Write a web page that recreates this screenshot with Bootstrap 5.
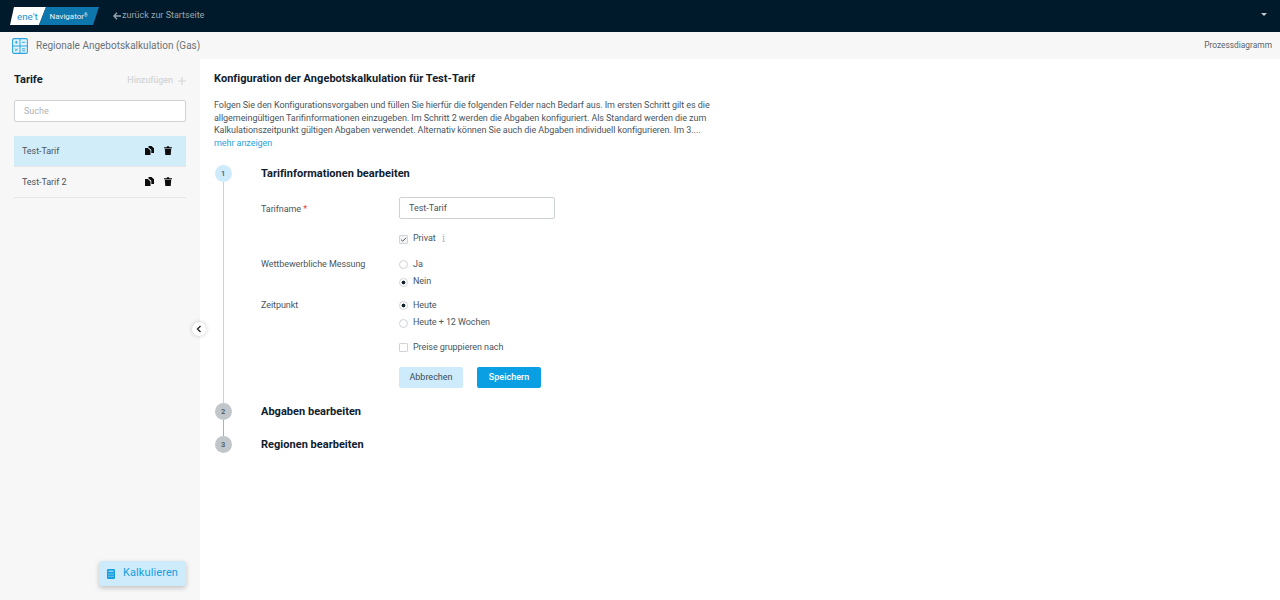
<!DOCTYPE html>
<html lang="de">
<head>
  <meta charset="UTF-8">
  <title>Regionale Angebotskalkulation</title>
  <link href="https://cdn.jsdelivr.net/npm/bootstrap@5.3.0/dist/css/bootstrap.min.css" rel="stylesheet">
  <style>
    html, body { height: 100%; }
    body { font-family: Roboto, "Liberation Sans", sans-serif; font-size: 9px; color: #4a5560; overflow: hidden; letter-spacing: -.07px; }
    .top-nav { height: 32px; background: #001a2c; padding: 0 10px; flex-wrap: nowrap; justify-content: flex-start; }
    .brand-logo { width: 90px; height: 18px; display: block; }
    .brand-logo text { font-family: Roboto, sans-serif; letter-spacing: 0; }
    .back-link { color: #9aa6ae; font-size: 9px; margin-left: 13px; text-decoration: none; letter-spacing: 0; gap: 1px; }
    .nav-caret { width: 0; height: 0; border-left: 3px solid transparent; border-right: 3px solid transparent; border-top: 3px solid #c4ccd2; margin-left: auto; margin-right: 3px; margin-top: -3px; }
    .sub-head { height: 27px; background: #f7f7f7; padding: 0 8px 0 12px; }
    .sub-title { font-size: 10px; color: #6b7278; margin-left: 8px; letter-spacing: 0; }
    .sub-link { font-size: 8.4px; color: #5c6369; margin-left: auto; letter-spacing: 0; }
    .page-body { height: 541px; }
    .side-col { width: 200px; background: #f7f7f7; padding: 0 14px 14px; position: relative; flex: none; }
    .side-head { height: 41px; padding-top: 2px; }
    .side-title { font-size: 11px; font-weight: 700; color: #10202c; letter-spacing: 0; }
    .side-add { font-size: 9px; font-weight: 500; color: #d2d6d9; margin-left: auto; }
    .side-add svg { margin-left: 5px; }
    .search-field { height: 22px; font-size: 9px; padding: 0 9px; border: 1px solid #ccd2d6; border-radius: 2px; }
    .search-field::placeholder { color: #adb3b8; opacity: 1; }
    .tarif-list { margin-top: 14px; border-radius: 0; }
    .tarif-item { background: transparent; border: 0; border-bottom: 1px solid #e4e6e8; border-radius: 0 !important; padding: 2px 14px 0 8px; height: 31px; font-size: 9px; color: #4a5560; }
    .tarif-item.is-on { background: #d2edfa; border-bottom-color: #e4e6e8; }
    .tarif-icons { margin-left: auto; gap: 10px; margin-top: -3px; }
    .calc-btn { margin-top: auto; align-self: flex-end; width: 87px; height: 25px; background: #cdebfb; color: #159ee0; font-size: 11px; border: 0; border-radius: 3px; box-shadow: 0 2px 5px rgba(0,0,0,.22); padding: 0; letter-spacing: .1px; }
    .calc-btn svg { margin-right: 8px; }
    .collapse-btn { position: absolute; left: 192px; top: 263px; width: 14px; height: 14px; background: #fff; border: 0; border-radius: 50%; box-shadow: 0 0 4px rgba(0,0,0,.22); padding: 0; }
    .main-col { flex: 1; background: #fff; padding: 0 14px; }
    .main-title { font-size: 11px; font-weight: 700; color: #10202c; margin: 0; height: 40px; line-height: 40px; letter-spacing: .04px; }
    .intro-text { width: 500px; font-size: 9px; line-height: 12.6px; margin: 0; letter-spacing: -.06px; white-space: nowrap; }
    .more-link { color: #2aa3e2; text-decoration: none; }
    .step-row { gap: 29px; }
    .step-rail { width: 18px; flex: none; }
    .step-dot { width: 17px; height: 17px; border-radius: 50%; background: #c0c6ca; color: #4a5560; font-size: 7.5px; font-weight: 500; flex: none; }
    .step-dot.is-on { background: #cdebfb; }
    .step-line { flex: 1; width: 1px; background: #aab1b6; }
    .step-line.is-on { background: #a9dcf6; }
    .step-head { font-size: 11px; font-weight: 700; color: #10202c; height: 17px; line-height: 17px; margin: 0; letter-spacing: .02px; }
    .first-step { margin-top: 16px; height: 238px; }
    .second-step { height: 33px; margin-top: 0; }
    .third-step { height: 17px; }
    .step-form { padding-top: 15px; }
    .form-line { display: flex; }
    .form-lab { width: 138px; flex: none; }
    .lab-top { padding-top: 2px; }
    .privat-line { margin-top: 11px; }
    .zeit-line { margin-top: 6px; }
    .preise-line { margin-top: 7px; }
    .btn-line { margin-top: 11px; }
    .req-star { color: #e2403c; }
    .name-field { width: 156px; height: 22px; font-size: 9px; padding: 0 9px; border: 1px solid #ccd2d6; border-radius: 2px; color: #4a5560; }
    .opt-line { height: 17.5px; display: flex; align-items: center; gap: 5px; margin: 0; padding: 0; min-height: 0; }
    .opt-line .form-check-input { width: 9px; height: 9px; margin: 0; float: none; border: 1px solid #d0d4d8; flex: none; }
    .opt-line .form-check-input:checked[type=radio] { background: radial-gradient(circle, #14222c 0 1.7px, #fff 2.2px); border-color: #d0d4d8; }
    .opt-line .form-check-input[type=checkbox] { border-radius: 1px; }
    .opt-line .form-check-input:checked[type=checkbox] { background: #f4f5f6 url("data:image/svg+xml,%3Csvg xmlns='http://www.w3.org/2000/svg' viewBox='0 0 9 9'%3E%3Cpath d='M2 4.6l1.7 1.6L7 2.8' fill='none' stroke='%23555' stroke-width='1'/%3E%3C/svg%3E") center/9px no-repeat; border-color: #d0d4d8; }
    .opt-line .form-check-label { font-size: 9px; color: #4a5560; }
    .info-mark { font-family: "DejaVu Serif", serif; font-size: 11px; color: #b5bbc0; margin-left: 1px; line-height: 1; margin-top: -2px; }
    .cancel-btn, .save-btn { width: 64px; height: 21px; font-size: 9px; padding: 0; border: 0; border-radius: 2px; font-weight: 500; letter-spacing: 0; }
    .cancel-btn { background: #cdebfb; color: #3b4b57; font-weight: 400; }
    .save-btn { background: #0a9fe3; color: #fff; margin-left: 14px; }
  </style>
</head>
<body>
  <nav class="navbar top-nav">
    <svg class="brand-logo" viewBox="0 0 90 18" aria-label="ene't Navigator">
      <polygon points="4,0 36,0 29,18 0,18" fill="#fff"/>
      <polygon points="36,0 89,0 83,18 29,18" fill="#0d76ad"/>
      <text x="7" y="12.500" font-size="9.800" fill="#1693d4">ene't</text>
      <text x="39.500" y="12" font-size="8" fill="#e8f3f9">Navigator<tspan font-size="4.500" dy="-2.500">®</tspan></text>
    </svg>
    <a class="back-link d-flex align-items-center" href="#">
      <svg width="8" height="8" viewBox="0 0 8 8"><path d="M4 .8 .9 4 4 7.200M1 4h7" fill="none" stroke="#9aa6ae" stroke-width="1.300"/></svg>
      zurück zur Startseite
    </a>
    <span class="nav-caret"></span>
  </nav>

  <div class="sub-head d-flex align-items-center">
    <svg width="16" height="16" viewBox="0 0 16 16">
      <rect x=".6" y=".6" width="14.800" height="14.800" rx="1.500" fill="#e3f3fc" stroke="#2aa3e2" stroke-width="1.100"/>
      <path d="M8 .6v14.800M.6 8h14.800" stroke="#2aa3e2" stroke-width="1"/>
      <path d="M2.800 4.300h3M4.300 2.800v3M10 4.300h3.200M3 10.500l2.400 2.400M5.400 10.500 3 12.900M10 10.800h3.200M10 12.800h3.200" stroke="#2aa3e2" stroke-width=".9"/>
    </svg>
    <span class="sub-title">Regionale Angebotskalkulation (Gas)</span>
    <span class="sub-link">Prozessdiagramm</span>
  </div>

  <div class="page-body d-flex">
    <aside class="side-col d-flex flex-column">
      <div class="side-head d-flex align-items-center">
        <span class="side-title">Tarife</span>
        <span class="side-add d-flex align-items-center">Hinzufügen
          <svg width="8" height="8" viewBox="0 0 8 8"><path d="M4 0v8M0 4h8" stroke="#d2d6d9" stroke-width="1.200"/></svg>
        </span>
      </div>
      <input class="form-control search-field" type="text" placeholder="Suche">
      <div class="list-group tarif-list">
        <div class="list-group-item tarif-item is-on d-flex align-items-center">
          Test-Tarif
          <span class="tarif-icons d-flex align-items-center">
            <svg width="9" height="9" viewBox="0 0 9 9"><path d="M3.500 0H6.500L9 2.200V7H6.300V3.800L3.500 1.500Z" fill="#0d0d0d"/><path d="M0 2H2.800L5.500 4.500V9H0Z" fill="#0d0d0d"/></svg>
            <svg width="8" height="9" viewBox="0 0 8 9"><path d="M0 1.200H2.600L3 .2H5L5.400 1.200H8V2.200H0ZM.8 2.800H7.200L6.700 9H1.300Z" fill="#0d0d0d"/></svg>
          </span>
        </div>
        <div class="list-group-item tarif-item d-flex align-items-center">
          Test-Tarif 2
          <span class="tarif-icons d-flex align-items-center">
            <svg width="9" height="9" viewBox="0 0 9 9"><path d="M3.500 0H6.500L9 2.200V7H6.300V3.800L3.500 1.500Z" fill="#0d0d0d"/><path d="M0 2H2.800L5.500 4.500V9H0Z" fill="#0d0d0d"/></svg>
            <svg width="8" height="9" viewBox="0 0 8 9"><path d="M0 1.200H2.600L3 .2H5L5.400 1.200H8V2.200H0ZM.8 2.800H7.200L6.700 9H1.300Z" fill="#0d0d0d"/></svg>
          </span>
        </div>
      </div>
      <button class="btn calc-btn d-flex align-items-center justify-content-center" type="button">
        <svg width="8" height="10" viewBox="0 0 8 10"><rect width="8" height="10" rx="1.300" fill="#159ee0"/><path d="M1.500 2.200h5M1.500 5h1M3.500 5h1M5.500 5h1M1.500 7.300h1M3.500 7.300h1M5.500 7.300h1" stroke="#cdebfb" stroke-width="1"/></svg>
        Kalkulieren
      </button>
      <button class="collapse-btn d-flex align-items-center justify-content-center" type="button" aria-label="Einklappen">
        <svg width="6" height="8" viewBox="0 0 6 8"><path d="M4.500 1 1.500 4l3 3" fill="none" stroke="#222" stroke-width="1.300"/></svg>
      </button>
    </aside>

    <main class="main-col">
      <h1 class="main-title">Konfiguration der Angebotskalkulation für Test-Tarif</h1>
      <p class="intro-text">Folgen Sie den Konfigurationsvorgaben und füllen Sie hierfür die folgenden Felder nach Bedarf aus. Im ersten Schritt gilt es die<br>allgemeingültigen Tarifinformationen einzugeben. Im Schritt 2 werden die Abgaben konfiguriert. Als Standard werden die zum<br>Kalkulationszeitpunkt gültigen Abgaben verwendet. Alternativ können Sie auch die Abgaben individuell konfigurieren. Im 3....<br><a class="more-link" href="#">mehr anzeigen</a></p>

      <div class="step-row first-step d-flex">
        <div class="step-rail d-flex flex-column align-items-center">
          <span class="step-dot is-on d-flex align-items-center justify-content-center">1</span>
          <span class="step-line is-on"></span>
        </div>
        <div class="flex-grow-1">
          <h2 class="step-head">Tarifinformationen bearbeiten</h2>
          <div class="step-form">
            <div class="form-line align-items-center">
              <label class="form-lab lab-top">Tarifname <span class="req-star">*</span></label>
              <input class="form-control name-field" type="text" value="Test-Tarif">
            </div>
            <div class="form-line privat-line">
              <span class="form-lab"></span>
              <div class="form-check opt-line">
                <input class="form-check-input" type="checkbox" id="privat" checked>
                <label class="form-check-label" for="privat">Privat</label>
                <span class="info-mark">i</span>
              </div>
            </div>
            <div class="form-line mt-2">
              <span class="form-lab lab-top">Wettbewerbliche Messung</span>
              <div>
                <div class="form-check opt-line"><input class="form-check-input" type="radio" name="messung" id="ja"><label class="form-check-label" for="ja">Ja</label></div>
                <div class="form-check opt-line"><input class="form-check-input" type="radio" name="messung" id="nein" checked><label class="form-check-label" for="nein">Nein</label></div>
              </div>
            </div>
            <div class="form-line zeit-line">
              <span class="form-lab lab-top">Zeitpunkt</span>
              <div>
                <div class="form-check opt-line"><input class="form-check-input" type="radio" name="zeit" id="heute" checked><label class="form-check-label" for="heute">Heute</label></div>
                <div class="form-check opt-line"><input class="form-check-input" type="radio" name="zeit" id="wochen"><label class="form-check-label" for="wochen">Heute + 12 Wochen</label></div>
              </div>
            </div>
            <div class="form-line preise-line">
              <span class="form-lab"></span>
              <div class="form-check opt-line"><input class="form-check-input" type="checkbox" id="preise"><label class="form-check-label" for="preise">Preise gruppieren nach</label></div>
            </div>
            <div class="form-line btn-line">
              <span class="form-lab"></span>
              <button class="btn cancel-btn" type="button">Abbrechen</button>
              <button class="btn save-btn" type="button">Speichern</button>
            </div>
          </div>
        </div>
      </div>

      <div class="step-row second-step d-flex">
        <div class="step-rail d-flex flex-column align-items-center">
          <span class="step-dot d-flex align-items-center justify-content-center">2</span>
          <span class="step-line"></span>
        </div>
        <h2 class="step-head">Abgaben bearbeiten</h2>
      </div>
      <div class="step-row third-step d-flex">
        <div class="step-rail d-flex flex-column align-items-center">
          <span class="step-dot d-flex align-items-center justify-content-center">3</span>
        </div>
        <h2 class="step-head">Regionen bearbeiten</h2>
      </div>
    </main>
  </div>
  <script src="https://cdn.jsdelivr.net/npm/bootstrap@5.3.0/dist/js/bootstrap.bundle.min.js"></script>
</body>
</html>
